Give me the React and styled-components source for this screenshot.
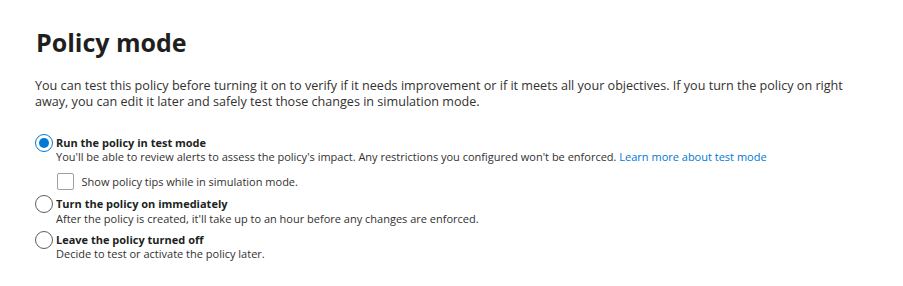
import React from "react";
import styled, { createGlobalStyle } from "styled-components";

const Global = createGlobalStyle`
  html, body { margin: 0; padding: 0; background: #ffffff; }
  body { font-family: "Open Sans", "Noto Sans", Arial, sans-serif; color: #323130; }
`;

const Page = styled.main`
  padding: 26px 35px 0 35px;
`;

const Title = styled.h1`
  margin: 0 0 0 1px;
  font-size: 25px;
  line-height: 32px;
  font-weight: 700;
  color: #201f1e;
`;

const Intro = styled.p`
  margin: 19.5px 0 0 0;
  font-size: 12.6px;
  line-height: 16.7px;
  max-width: 835px;
`;

const Options = styled.div`
  margin-top: 24.9px;
  display: flex;
  flex-direction: column;
  gap: 7px;
`;

const Option = styled.div`
  display: grid;
  grid-template-columns: 21px 1fr;
  align-items: start;
`;

const RadioCircle = styled.span`
  box-sizing: border-box;
  width: 18px;
  height: 18px;
  margin-top: -1.8px;
  border-radius: 50%;
  border: 1px solid ${(p) => (p.$checked ? "#0078d4" : "#605e5c")};
  display: flex;
  align-items: center;
  justify-content: center;
  &::after {
    content: "";
    width: 10px;
    height: 10px;
    border-radius: 50%;
    background: ${(p) => (p.$checked ? "#0078d4" : "transparent")};
  }
`;

const Body = styled.div`
  display: flex;
  flex-direction: column;
`;

const Label = styled.div`
  font-size: 11px;
  line-height: 14.4px;
  font-weight: 700;
  color: #201f1e;
`;

const Desc = styled.div`
  font-size: 11px;
  line-height: 14.4px;
`;

const Link = styled.a`
  color: #0078d4;
  text-decoration: none;
`;

const CheckRow = styled.label`
  margin-top: 8.5px;
  display: flex;
  align-items: center;
  gap: 7.5px;
  padding-left: 1px;
  font-size: 11px;
  line-height: 17px;
`;

const Box = styled.span`
  box-sizing: border-box;
  width: 17px;
  height: 17px;
  border: 1px solid #a19f9d;
  border-radius: 2px;
`;

function Radio({ checked, title, children }) {
  return (
    <Option>
      <RadioCircle $checked={checked} />
      <Body>
        <Label>{title}</Label>
        {children}
      </Body>
    </Option>
  );
}

export default function App() {
  return (
    <>
      <Global />
      <Page>
        <Title>Policy mode</Title>
        <Intro>
          You can test this policy before turning it on to verify if it needs improvement or if it
          meets all your objectives. If you turn the policy on right away, you can edit it later and
          safely test those changes in simulation mode.
        </Intro>
        <Options>
          <Radio checked title="Run the policy in test mode">
            <Desc>
              You'll be able to review alerts to assess the policy's impact. Any restrictions you
              configured won't be enforced. <Link href="#">Learn more about test mode</Link>
            </Desc>
            <CheckRow>
              <Box />
              Show policy tips while in simulation mode.
            </CheckRow>
          </Radio>
          <Radio title="Turn the policy on immediately">
            <Desc>After the policy is created, it'll take up to an hour before any changes are enforced.</Desc>
          </Radio>
          <Radio title="Leave the policy turned off">
            <Desc>Decide to test or activate the policy later.</Desc>
          </Radio>
        </Options>
      </Page>
    </>
  );
}
